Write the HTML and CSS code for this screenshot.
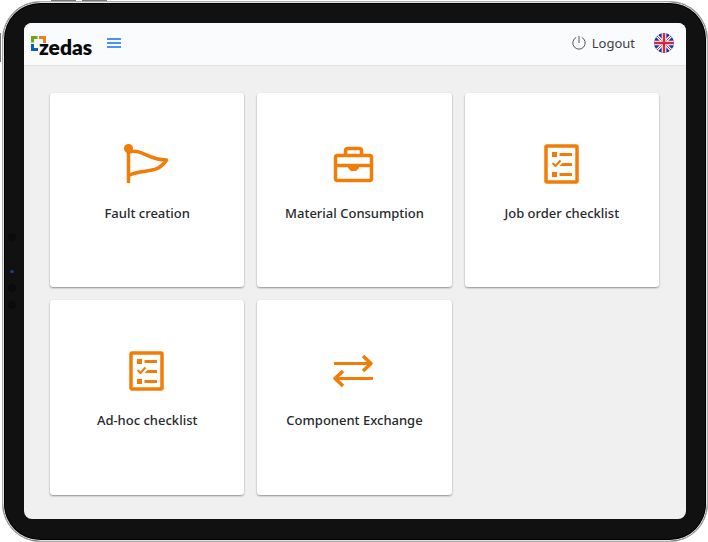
FILE: index.html
```
<!DOCTYPE html>
<html lang="en">
<head>
<meta charset="UTF-8">
<meta name="viewport" content="width=device-width, initial-scale=1">
<title>zedas</title>
<link rel="stylesheet" href="styles.css">
</head>
<body>

<div class="tablet">
    <span class="side-key key-top-1"></span>
    <span class="side-key key-top-2"></span>
    <span class="side-key key-left"></span>
    <span class="sensor sensor-1"></span>
    <span class="camera"></span>
    <span class="sensor sensor-2"></span>
    <span class="sensor sensor-3"></span>

    <div class="screen">
        <header>
            <a href="#" class="logo">
                <svg class="logo-mark" viewBox="0 0 16 16" fill="none" stroke-width="3">
                    <path d="M1.500 6.500V1.500H6.500" stroke="#6fa512"/>
                    <path d="M8 1.500H13.500V7" stroke="#f47b20"/>
                    <path d="M1.500 8V13.500H7" stroke="#0b62b8"/>
                </svg>
                <span class="logo-text">zedas</span>
            </a>
            <button class="menu-btn" aria-label="Menu">
                <svg width="14" height="10" viewBox="0 0 14 10" stroke="#4a94f0" stroke-width="1.800">
                    <path d="M0 1H14M0 5H14M0 9H14"/>
                </svg>
            </button>
            <button class="logout-btn">
                <svg width="14" height="14" viewBox="0 0 14 14" fill="none" stroke="#555" stroke-width="1">
                    <path d="M7 0V7M4.200 1.400A6.200 6.200 0 1 0 9.800 1.400"/>
                </svg>
                Logout
            </button>
            <button class="lang-btn" aria-label="English">
                <svg width="20" height="20" viewBox="0 0 20 20">
                    <clipPath id="round"><circle cx="10" cy="10" r="10"/></clipPath>
                    <g clip-path="url(#round)">
                        <rect width="20" height="20" fill="#123c9c"/>
                        <path d="M0 0L20 20M20 0L0 20" stroke="#fff" stroke-width="3"/>
                        <path d="M0 0L20 20M20 0L0 20" stroke="#e0243a" stroke-width="1"/>
                        <path d="M10 0V20M0 10H20" stroke="#fff" stroke-width="4.600"/>
                        <path d="M10 0V20M0 10H20" stroke="#e0203a" stroke-width="2.400"/>
                    </g>
                </svg>
            </button>
        </header>

        <main class="cards">
            <a href="#" class="card">
                <svg class="icon" viewBox="0 0 48 40">
                    <circle cx="5.500" cy="4.500" r="4.500"/>
                    <path class="line" d="M5.500 4V39M5.500 8C20 4.500 24 16 43.500 16C34 31 21 24 5.500 31.500"/>
                </svg>
                <span>Fault creation</span>
            </a>
            <a href="#" class="card">
                <svg class="icon" viewBox="0 0 48 40">
                    <path class="line" d="M15.500 11V7Q15.500 4.500 18 4.500H29Q31.500 4.500 31.500 7V11"/>
                    <rect class="line" x="5.500" y="11.500" width="36" height="25" rx="2"/>
                    <path class="line" d="M5 21.500H42"/>
                    <path d="M18 22H29V24L26 27H21L18 24Z"/>
                </svg>
                <span>Material Consumption</span>
            </a>
            <a href="#" class="card">
                <svg class="icon" viewBox="0 0 48 40">
                    <rect class="line" x="8" y="2" width="31" height="36" rx="1"/>
                    <path d="M14 8H19V13H14ZM14 28H19V33H14ZM21.500 9H34V12H21.500ZM24.500 19H34V22H21.500ZM21.500 29H34V32H21.500Z"/>
                    <path class="line thin" d="M14.500 19L17.500 22L22.500 16.500"/>
                </svg>
                <span>Job order checklist</span>
            </a>
            <a href="#" class="card">
                <svg class="icon" viewBox="0 0 48 40">
                    <rect class="line" x="8" y="2" width="31" height="36" rx="1"/>
                    <path d="M14 8H19V13H14ZM14 28H19V33H14ZM21.500 9H34V12H21.500ZM24.500 19H34V22H21.500ZM21.500 29H34V32H21.500Z"/>
                    <path class="line thin" d="M14.500 19L17.500 22L22.500 16.500"/>
                </svg>
                <span>Ad-hoc checklist</span>
            </a>
            <a href="#" class="card">
                <svg class="icon" viewBox="0 0 48 40">
                    <path class="line arrow" d="M4 12.500H41M4.500 27.500H43"/>
                    <path class="line" d="M33 5L41 12.500L33 20M13 20L5 27.500L13 35"/>
                </svg>
                <span>Component Exchange</span>
            </a>
        </main>
    </div>
</div>

</body>
</html>
```
FILE: styles.css
```
* {
    box-sizing: border-box;
}
body {
    margin: 0;
    padding: 1px 0 0 2px;
    min-height: 100vh;
    display: flex;
    background: #fff;
    font-family: "Noto Sans", "Open Sans", sans-serif;
    color: #26292e;
}
button {
    background: none;
    border: none;
    padding: 0;
    font: inherit;
    color: inherit;
    cursor: pointer;
    display: flex;
    align-items: center;
}
a {
    color: inherit;
    text-decoration: none;
}

/* device */
.tablet {
    position: relative;
    flex: 1;
    display: flex;
    padding: 21px 21px 22px;
    background: #111;
    border: 1px solid #aaa;
    border-radius: 38px;
    box-shadow: inset 0 0 0 1px #e4e4e4, inset 0 0 0 2px #000;
}
.side-key {
    position: absolute;
    background: #777;
}
.key-top-1, .key-top-2 {
    top: -2px;
    width: 25px;
    height: 1px;
}
.key-top-1 {
    left: 48px;
}
.key-top-2 {
    left: 79px;
}
.key-left {
    left: -3px;
    top: 31px;
    width: 1px;
    height: 29px;
}
.sensor, .camera {
    position: absolute;
    border-radius: 50%;
}
.sensor {
    left: 5px;
    width: 8px;
    height: 8px;
    background: #0b0b0d;
}
.sensor-1 {
    top: 231px;
}
.sensor-2 {
    top: 282px;
}
.sensor-3 {
    top: 299px;
}
.camera {
    left: 7px;
    top: 268px;
    width: 4px;
    height: 3px;
    background: #183e96;
}

/* screen */
.screen {
    flex: 1;
    background: #f0f0f0;
    border-radius: 8px;
    overflow: hidden;
}
header {
    height: 43px;
    padding: 0 12px 2px 7px;
    display: flex;
    align-items: center;
    background: #fafbfd;
    border-bottom: 1px solid #e0e1e3;
}
.logo {
    position: relative;
    padding-left: 8px;
}
.logo-mark {
    position: absolute;
    left: 0;
    top: 9px;
    width: 16px;
    height: 16px;
}
.logo-text {
    position: relative;
    display: block;
    padding-top: 8px;
    font-family: Lato, sans-serif;
    font-size: 21px;
    font-weight: 800;
    line-height: 24px;
    color: #0a0a0a;
}
.menu-btn {
    margin-left: 15px;
}
.logout-btn {
    margin-left: auto;
    gap: 6px;
    font-size: 13px;
    line-height: 18px;
    color: #3c4047;
}
.lang-btn {
    margin-left: 19px;
}

/* tiles */
.cards {
    display: grid;
    grid-template-columns: repeat(3, 1fr);
    gap: 13px;
    padding: 27px 27px 24px 26px;
}
.card {
    aspect-ratio: 1;
    display: flex;
    flex-direction: column;
    align-items: center;
    justify-content: center;
    gap: 20px;
    padding-bottom: 14px;
    background: #fff;
    border-radius: 3px;
    box-shadow: 0 1px 2px rgba(0,0,0,0.4);
    font-size: 13px;
    font-weight: 500;
    line-height: 18px;
    text-align: center;
}
.icon {
    width: 48px;
    height: 40px;
    fill: #f27c08;
}
.line {
    fill: none;
    stroke: #f27c08;
    stroke-width: 3.500;
    stroke-linejoin: round;
}
.thin {
    stroke-width: 2;
}
.arrow {
    stroke-width: 3;
}
```
